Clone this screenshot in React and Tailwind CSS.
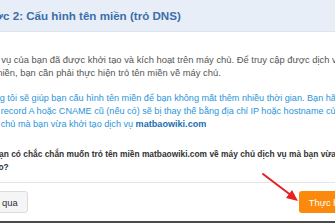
export default function App() {
  return (
    <div
      className="relative flex h-[223px] w-[335px] flex-col overflow-hidden bg-white"
      style={{ fontFamily: '"Liberation Sans", Arial, sans-serif' }}
    >
      {/* Header */}
      <div className="flex h-[32px] shrink-0 items-center border-b border-[#dde4ee] bg-[#e8eef7]">
        <h3 className="-ml-[22px] whitespace-nowrap text-[11.6px] font-bold text-[#3b6ea8]">
          Bước 2: Cấu hình tên miền (trỏ DNS)
        </h3>
      </div>

      {/* Body */}
      <div className="flex flex-col pt-[21px] leading-[13px]">
        <div className="text-[9.4px] text-[#555]">
          <p className="-ml-[20px] whitespace-nowrap">Dịch vụ của bạn đã được khởi tạo và kích hoạt trên máy chủ. Để truy cập được dịch vụ qua</p>
          <p className="-ml-[21px] whitespace-nowrap">tên miền, bạn cần phải thực hiện trỏ tên miền về máy chủ.</p>
        </div>

        <div className="mt-[13px] text-[9.1px] text-[#2b95d9]">
          <p className="-ml-[22px] whitespace-nowrap">Chúng tôi sẽ giúp bạn cấu hình tên miền để bạn không mất thêm nhiều thời gian. Bạn hãy lưu ý</p>
          <p className="-ml-[18px] whitespace-nowrap">Các record A hoặc CNAME cũ (nếu có) sẽ bị thay thế bằng địa chỉ IP hoặc hostname của</p>
          <p className="-ml-[19px] whitespace-nowrap">
            máy chủ mà bạn vừa khởi tạo dịch vụ <b className="text-[#1a6eb3]">matbaowiki.com</b>
          </p>
        </div>

        <div className="mt-[17px] text-[8.4px] font-bold text-[#333]">
          <p className="-ml-[7px] whitespace-nowrap">Bạn có chắc chắn muốn trỏ tên miền matbaowiki.com về máy chủ dịch vụ mà bạn vừa khởi tạo</p>
          <p className="-ml-[9px] whitespace-nowrap">tạo?</p>
        </div>

        <div className="mt-[8px] border-t border-[#e5e5e5]" />

        <div className="mt-[8px] flex h-[22px] items-stretch justify-between">
          <button className="-ml-[21px] rounded-[3px] border border-[#dcdcdc] bg-[#f5f5f5] pl-[8px] pr-[9px] text-[9.4px] text-[#333]">
            Bỏ qua
          </button>
          <button className="-mr-[26px] rounded-[3px] bg-[#fb8a0c] px-[10px] text-[9.4px] text-white">
            Thực hiện
          </button>
        </div>
      </div>

      <div className="mt-auto h-[2px] bg-[#4a4a4a]" />

      {/* Red arrow annotation */}
      <svg className="pointer-events-none absolute left-0 top-0" width="335" height="223">
        <line x1="263" y1="174" x2="292" y2="196" stroke="#e8201f" strokeWidth="2" strokeLinecap="round" />
        <polygon points="298,201 286,198 292,190" fill="#e8201f" />
      </svg>
    </div>
  );
}
